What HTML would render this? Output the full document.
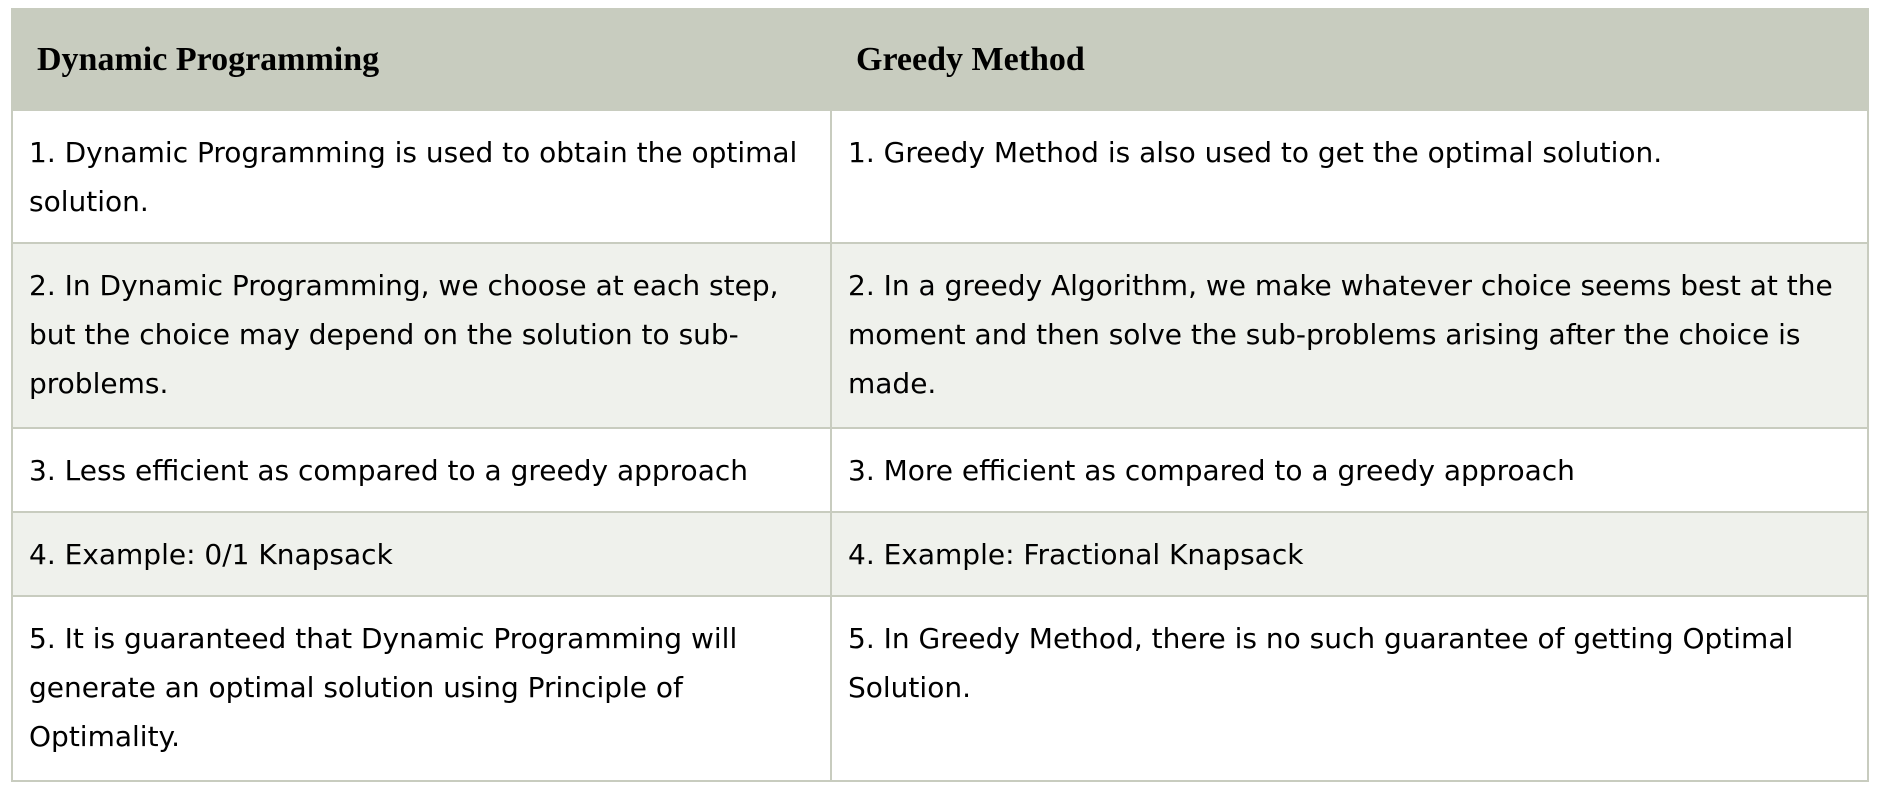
<!DOCTYPE html>
<html><head><style>
html,body{margin:0;padding:0;background:#fff;width:1882px;height:794px;overflow:hidden}
table{position:absolute;left:11px;top:8px;width:1858px;border-collapse:collapse;table-layout:fixed}
td,th{border:2px solid #c8ccbf;vertical-align:top;text-align:left}
th{background:#c8ccbf;font-family:"Liberation Serif",serif;font-weight:bold;font-size:34px;height:101px;box-sizing:border-box;padding:0 24px;vertical-align:middle;color:#000}
td{font-family:"DejaVu Sans","Verdana",sans-serif;font-size:28px;line-height:49px;padding:17px 18px 16px 16px;color:#000}
tr.t td{padding-bottom:19px}
tr.e td{background:#eff1ec}
col.a{width:819px}
</style></head><body>
<table>
<col class="a"><col>
<tr><th>Dynamic Programming</th><th>Greedy Method</th></tr>
<tr><td>1. Dynamic Programming is used to obtain the optimal solution.</td><td>1. Greedy Method is also used to get the optimal solution.</td></tr>
<tr class="e t"><td>2. In Dynamic Programming, we choose at each step, but the choice may depend on the solution to sub-problems.</td><td>2. In a greedy Algorithm, we make whatever choice seems best at the moment and then solve the sub-problems arising after the choice is made.</td></tr>
<tr><td>3. Less efficient as compared to a greedy approach</td><td>3. More efficient as compared to a greedy approach</td></tr>
<tr class="e"><td>4. Example: 0/1 Knapsack</td><td>4. Example: Fractional Knapsack</td></tr>
<tr class="t"><td>5. It is guaranteed that Dynamic Programming will generate an optimal solution using Principle of Optimality.</td><td>5. In Greedy Method, there is no such guarantee of getting Optimal Solution.</td></tr>
</table>
</body></html>
